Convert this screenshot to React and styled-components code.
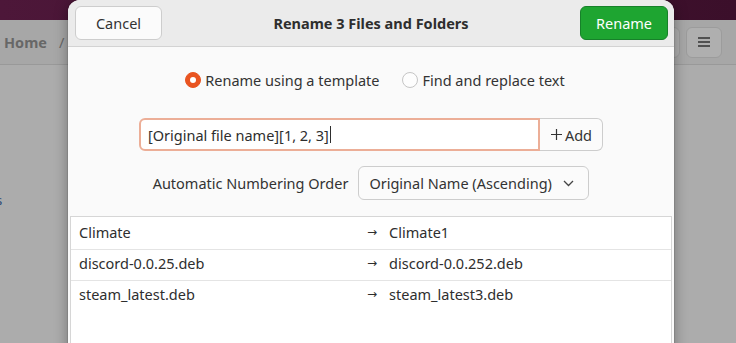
import React from "react";
import styled, { createGlobalStyle } from "styled-components";

const Global = createGlobalStyle`
  html, body { margin: 0; padding: 0; }
  body {
    width: 736px;
    height: 343px;
    overflow: hidden;
    font-family: "Noto Sans", "Open Sans", sans-serif;
  }
`

const Screen = styled.div`
  position: relative;
  width: 736px;
  height: 343px;
  overflow: hidden;
  background: #acacac;
`
const Desktop = styled.div`
  display: flex;
  flex-direction: column;
  height: 100%;
`
const TopBar = styled.div`
  height: 20px;
  background: linear-gradient(90deg, #4d1739, #3b0f2a);
`
const WindowHeader = styled.div`
  height: 45px;
  display: flex;
  align-items: center;
  justify-content: space-between;
  padding: 0 14px 0 0;
  background: #a7a7a7;
  border-bottom: 1px solid #999;
  box-sizing: border-box;
`
const PathBar = styled.div`
  height: 32px;
  display: flex;
  align-items: center;
  gap: 12px;
  padding-left: 4px;
  font-size: 14.5px;
  font-weight: 700;
  color: #676767;
`
const Slash = styled.span`
  font-weight: 400;
`
const HeaderTools = styled.div`
  display: flex;
  gap: 6px;
`
const ToolButton = styled.div`
  width: 36px;
  height: 31px;
  border-radius: 6px;
  border: 1px solid #9c9c9c;
  background: #afafaf;
  box-sizing: border-box;
  display: flex;
  align-items: center;
  justify-content: center;
`
const FileArea = styled.div`
  flex: 1;
  padding: 126px 0 0 0;
  font-size: 13px;
  color: #2e4a73;
  margin-left: -4px;
`

const Dialog = styled.div`
  position: absolute;
  left: 68px;
  top: 0;
  width: 606px;
  height: 380px;
  background: #fafafa;
  border-radius: 12px 12px 0 0;
  box-shadow: 0 0 0 1px rgba(0, 0, 0, 0.08), 0 2px 14px rgba(0, 0, 0, 0.35);
  display: flex;
  flex-direction: column;
  overflow: hidden;
`
const DialogHeader = styled.div`
  height: 46px;
  flex: none;
  display: flex;
  align-items: center;
  justify-content: space-between;
  padding: 0 6px 0 7px;
  background: #ebebeb;
  border-bottom: 1px solid #d3d3d3;
`
const Title = styled.div`
  font-size: 14.5px;
  font-weight: 700;
  color: #2e2e2e;
`
const Button = styled.button`
  height: 34px;
  width: ${p => p.$width}px;
  border-radius: 6px;
  font-family: inherit;
  font-size: 14.5px;
  padding: 0;
  box-sizing: border-box;
  border: 1px solid ${p => (p.$primary ? "#17812a" : "#cdcdcd")};
  background: ${p => (p.$primary ? "#1ea531" : "#fbfbfb")};
  color: ${p => (p.$primary ? "#ffffff" : "#333")};
`

const Body = styled.div`
  display: flex;
  flex-direction: column;
  align-items: center;
  padding-top: 21px;
`
const RadioRow = styled.div`
  display: flex;
  gap: 23px;
  margin-left: 8px;
  height: 24px;
  align-items: center;
`
const RadioOption = styled.label`
  display: flex;
  align-items: center;
  gap: 4px;
  font-size: 14.5px;
  color: #333;
`
const RadioDot = styled.span`
  width: 16px;
  height: 16px;
  border-radius: 50%;
  box-sizing: border-box;
  display: flex;
  align-items: center;
  justify-content: center;
  background: ${p => (p.$on ? "#e95420" : "#fdfdfd")};
  border: 1px solid ${p => (p.$on ? "#e95420" : "#c5c5c5")};
  &::after {
    content: "";
    width: 6px;
    height: 6px;
    border-radius: 50%;
    background: #fff;
    display: ${p => (p.$on ? "block" : "none")};
  }
`
const TemplateRow = styled.div`
  display: flex;
  margin-top: 26px;
`
const Entry = styled.div`
  width: 401px;
  height: 33px;
  box-sizing: border-box;
  border: 2px solid #ecae97;
  border-radius: 6px 0 0 6px;
  background: #fff;
  display: flex;
  align-items: center;
  padding-left: 7px;
  font-size: 14.5px;
  color: #2e2e2e;
`
const Caret = styled.span`
  display: inline-block;
  width: 1px;
  height: 17px;
  background: #2e2e2e;
  margin-left: 1px;
`
const AddButton = styled.div`
  width: 63px;
  height: 33px;
  box-sizing: border-box;
  border: 1px solid #cdcdcd;
  border-left: none;
  border-radius: 0 6px 6px 0;
  background: #fbfbfb;
  display: flex;
  align-items: center;
  justify-content: center;
  gap: 2px;
  font-size: 14.5px;
  color: #333;
`
const NumberingRow = styled.div`
  display: flex;
  align-items: center;
  gap: 10px;
  margin-top: 15px;
`
const Label = styled.span`
  font-size: 14.5px;
  color: #333;
`
const Dropdown = styled.div`
  width: 231px;
  height: 34px;
  box-sizing: border-box;
  border: 1px solid #cdcdcd;
  border-radius: 6px;
  background: #fbfbfb;
  display: flex;
  align-items: center;
  justify-content: space-between;
  padding: 0 14px 0 10px;
  font-size: 14.5px;
  color: #333;
`
const List = styled.div`
  margin: 16px 2px 0 2px;
  border: 1px solid #d6d6d6;
  background: #fff;
  flex: 1;
`
const Row = styled.div`
  display: grid;
  grid-template-columns: 288px 1fr;
  height: 30px;
  align-items: center;
  padding: 0 0 2px 8px;
  box-sizing: content-box;
  margin-bottom: -2px;
  font-size: 14.5px;
  color: #2e2e2e;
  border-bottom: 1px solid #e4e4e4;
  &:nth-child(3) { border-bottom: none; }
`
const NewName = styled.span`
  display: flex;
  align-items: center;
  gap: 12px;
`
const Arrow = styled.span`
  font-family: "DejaVu Sans", sans-serif;
  font-size: 12px;
  line-height: 1;
`

const files = [
  ["Climate", "Climate1"],
  ["discord-0.0.25.deb", "discord-0.0.252.deb"],
  ["steam_latest.deb", "steam_latest3.deb"],
];

export default function App() {
  return (
    <Screen>
      <Global />
      <Desktop>
        <TopBar />
        <WindowHeader>
          <PathBar>
            Home <Slash>/</Slash>
          </PathBar>
          <HeaderTools>
            <ToolButton />
            <ToolButton>
              <svg width="14" height="12" viewBox="0 0 14 12">
                <path d="M1 2h12M1 6h12M1 10h12" stroke="#333" strokeWidth="1.4" />
              </svg>
            </ToolButton>
          </HeaderTools>
        </WindowHeader>
        <FileArea>s</FileArea>
      </Desktop>

      <Dialog>
        <DialogHeader>
          <Button $width={87}>Cancel</Button>
          <Title>Rename 3 Files and Folders</Title>
          <Button $width={88} $primary>Rename</Button>
        </DialogHeader>
        <Body>
          <RadioRow>
            <RadioOption><RadioDot $on />Rename using a template</RadioOption>
            <RadioOption><RadioDot />Find and replace text</RadioOption>
          </RadioRow>
          <TemplateRow>
            <Entry>[Original file name][1, 2, 3]<Caret /></Entry>
            <AddButton>
              <svg width="13" height="13" viewBox="0 0 13 13">
                <path d="M6.5 1v11M1 6.5h11" stroke="#333" strokeWidth="1.2" />
              </svg>
              Add
            </AddButton>
          </TemplateRow>
          <NumberingRow>
            <Label>Automatic Numbering Order</Label>
            <Dropdown>
              Original Name (Ascending)
              <svg width="11" height="7" viewBox="0 0 11 7">
                <path d="M1 1l4.5 4.5L10 1" stroke="#444" strokeWidth="1.3" fill="none" />
              </svg>
            </Dropdown>
          </NumberingRow>
        </Body>
        <List>
          {files.map(([from, to]) => (
            <Row key={from}>
              <span>{from}</span>
              <NewName><Arrow>→</Arrow>{to}</NewName>
            </Row>
          ))}
        </List>
      </Dialog>
    </Screen>
  );
}
